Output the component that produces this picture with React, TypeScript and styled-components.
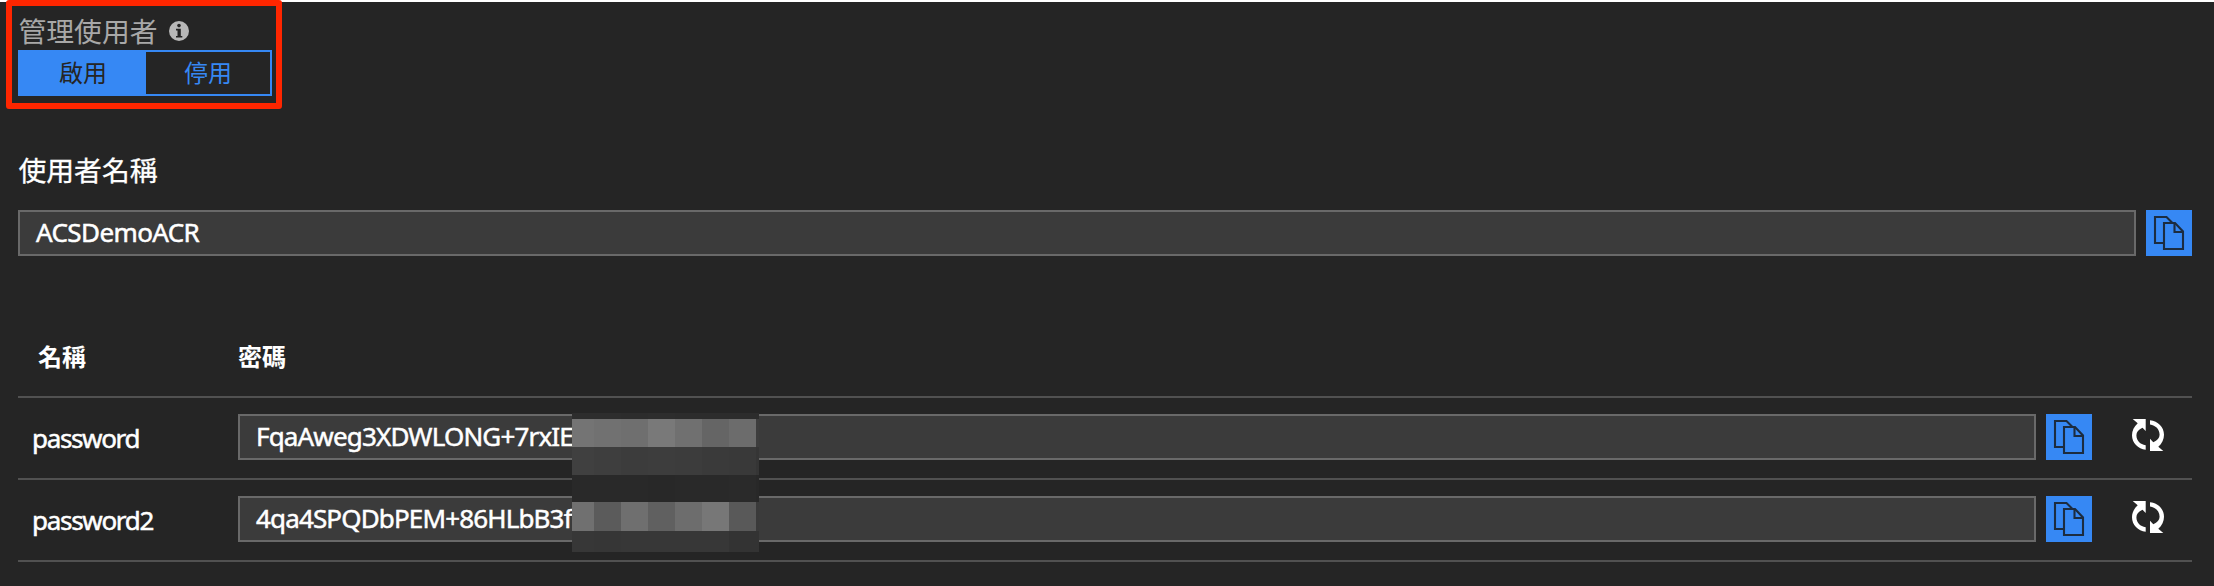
import React from "react";
import styled, { createGlobalStyle } from "styled-components";

const GlobalStyle = createGlobalStyle`
  * { box-sizing: border-box; }
  body {
    margin: 0;
    background: #252525;
    color: #fff;
    font-family: "Noto Sans", "Noto Sans CJK TC", sans-serif;
  }
`;

const Page = styled.main`
  position: relative;
  height: 586px;
  padding: 12px 22px 0 18px;
  border-top: 2px solid #fff;
  background: #252525;
`;

const Label = styled.div<{ $muted?: boolean }>`
  display: flex;
  align-items: center;
  gap: 11px;
  height: 34px;
  font-family: "Noto Sans CJK TC", sans-serif;
  font-size: 27.8px;
  line-height: 32px;
  color: ${(p) => (p.$muted ? "#a8a8a8" : "#fff")};
  -webkit-text-stroke: ${(p) => (p.$muted ? "0" : "0.3px #fff")};
`;

const LabelText = styled.span`
  margin: -2px 0 0 0.5px;
`;

const Toggle = styled.div`
  display: flex;
  width: 254px;
  height: 46px;
  margin-top: 2px;
  border: 2px solid #3688f4;
`;

const ToggleOption = styled.button<{ $active?: boolean }>`
  flex: ${(p) => (p.$active ? "0 0 126px" : "1")};
  padding: 0 0 2px;
  border: 0;
  font-family: "Noto Sans CJK TC", sans-serif;
  font-size: 24px;
  line-height: 40px;
  background: ${(p) => (p.$active ? "#3688f4" : "transparent")};
  color: ${(p) => (p.$active ? "#252525" : "#3688f4")};
`;

const Highlight = styled.div`
  position: absolute;
  left: 6px;
  top: -2px;
  width: 276px;
  height: 109px;
  border: 6px solid #ff2600;
  border-radius: 3px;
`;

const UserSection = styled.section`
  margin-top: 57px;
`;

const FieldRow = styled.div`
  display: flex;
  gap: 10px;
`;

const UserField = styled(FieldRow)`
  margin-top: 23px;
`;

const ReadOnlyField = styled.div`
  flex: 1;
  height: 46px;
  padding-left: 16px;
  border: 2px solid #696969;
  background: #3b3b3b;
  font-size: 26px;
  line-height: 41px;
  white-space: nowrap;
`;

const FieldText = styled.span<{ $spacing: number }>`
  -webkit-text-stroke: 0.5px #fff;
  letter-spacing: ${(p) => p.$spacing}px;
`;

const CopyButton = styled.button`
  width: 46px;
  height: 46px;
  padding: 0;
  border: 0;
  background: #3688f4;
  svg { display: block; }
`;

const Table = styled.section`
  margin-top: 80px;
`;

const HeaderRow = styled.div`
  display: grid;
  grid-template-columns: 220px 1fr;
  height: 62px;
  border-bottom: 2px solid #515151;
  font-family: "Noto Sans CJK TC", sans-serif;
  font-weight: 700;
  font-size: 24px;
  line-height: 40px;
`;

const NameHeader = styled.span`
  padding-left: 20px;
`;

const TableRow = styled.div`
  display: grid;
  grid-template-columns: 220px 1fr 100px;
  height: 82px;
  padding-top: 16px;
  border-bottom: 2px solid #515151;
`;

const NameCell = styled.div`
  padding-left: 14px;
  font-size: 26px;
  line-height: 48px;
`;

const RefreshButton = styled.button`
  justify-self: start;
  width: 34px;
  height: 34px;
  margin: 4px 0 0 39px;
  padding: 0;
  border: 0;
  background: none;
  svg { display: block; }
`;

const Mosaic = styled.div`
  position: absolute;
  left: 572px;
  top: 411px;
  display: grid;
  grid-template-columns: 22px repeat(6, 27px) 3px;
  grid-template-rows: 6px 28px 28px 27px 28.5px 21.5px;
`;

const Tile = styled.i<{ $shade: string }>`
  background: ${(p) => p.$shade};
`;

const shades = [
  "#2d2d2d #2d2d2d #2c2c2c #2d2d2d #2c2c2c #2c2c2c #2c2c2c #2c2c2c",
  "#747474 #717171 #6f6f6f #797979 #707070 #656565 #6c6c6c #3d3d3d",
  "#404040 #3e3e3e #3c3c3c #3d3d3d #3c3c3c #3a3a3a #393939 #353535",
  "#292929 #292929 #292929 #282828 #292929 #292929 #2a2a2a #282828",
  "#707070 #5b5b5b #6f6f6f #606060 #6d6d6d #777777 #595959 #3a3a3a",
  "#373737 #363636 #373737 #373737 #373737 #373737 #333333 #333333",
].flatMap((row) => row.split(" "));

const InfoIcon = () => (
  <svg width="20" height="20" viewBox="0 0 20 20">
    <circle cx="10" cy="10" r="10" fill="#b8b8b8" />
    <circle cx="10" cy="4.6" r="1.8" fill="#252525" />
    <path d="M7 7.8h4.8v7.2h1.5v1.6H7V15h1.5V9.4H7z" fill="#252525" />
  </svg>
);

const CopyIcon = () => (
  <svg width="46" height="46" viewBox="0 0 46 46" fill="none" stroke="#1c2c40" strokeWidth="2.1">
    <path d="M17 33H9V7h11.5l6 6" />
    <path d="M18 13h11l8 8.5V39H18z" />
    <path d="M28.500 13v9H37" />
  </svg>
);

const RefreshIcon = () => (
  <svg width="34" height="34" viewBox="0 0 34 34">
    <path d="M14.700 1v12l-3.200-3.300C7.500 11.500 5.400 14 5.400 17.300c0 5.200 3.900 9.300 9.300 10v4.400C7 31 1 25 1 17.300 1 12.800 3 8.500 6.700 5.200L1.700 1z" fill="#fff" />
    <path d="M19 33V20.800l3.300 3.400C26.400 22.500 28.600 20 28.600 16.700c0-5.200-4-9.400-9.600-10.100V2.200C27 3 33 9 33 16.700c0 4.500-2 8.800-5.700 12.100L32.300 33z" fill="#fff" />
  </svg>
);

const credentials = [
  { name: "password", value: "FqaAweg3XDWLONG+7rxIE", nameSpacing: -1.35, spacing: -0.83 },
  { name: "password2", value: "4qa4SPQDbPEM+86HLbB3f", nameSpacing: -1.3, spacing: -0.85 },
];

export default function App() {
  return (
    <>
      <GlobalStyle />
      <Page>
        <Label $muted>
          <LabelText>管理使用者</LabelText>
          <InfoIcon />
        </Label>
        <Toggle>
          <ToggleOption $active>啟用</ToggleOption>
          <ToggleOption>停用</ToggleOption>
        </Toggle>
        <UserSection>
          <Label><LabelText>使用者名稱</LabelText></Label>
          <UserField>
            <ReadOnlyField>
              <FieldText $spacing={-0.6}>ACSDemoACR</FieldText>
            </ReadOnlyField>
            <CopyButton aria-label="複製"><CopyIcon /></CopyButton>
          </UserField>
        </UserSection>
        <Table>
          <HeaderRow>
            <NameHeader>名稱</NameHeader>
            <span>密碼</span>
          </HeaderRow>
          {credentials.map((c) => (
            <TableRow key={c.name}>
              <NameCell><FieldText $spacing={c.nameSpacing}>{c.name}</FieldText></NameCell>
              <FieldRow>
                <ReadOnlyField><FieldText $spacing={c.spacing}>{c.value}</FieldText></ReadOnlyField>
                <CopyButton aria-label="複製"><CopyIcon /></CopyButton>
              </FieldRow>
              <RefreshButton aria-label="重新產生"><RefreshIcon /></RefreshButton>
            </TableRow>
          ))}
        </Table>
        <Mosaic>
          {shades.map((s, i) => <Tile key={i} $shade={s} />)}
        </Mosaic>
        <Highlight />
      </Page>
    </>
  );
}
